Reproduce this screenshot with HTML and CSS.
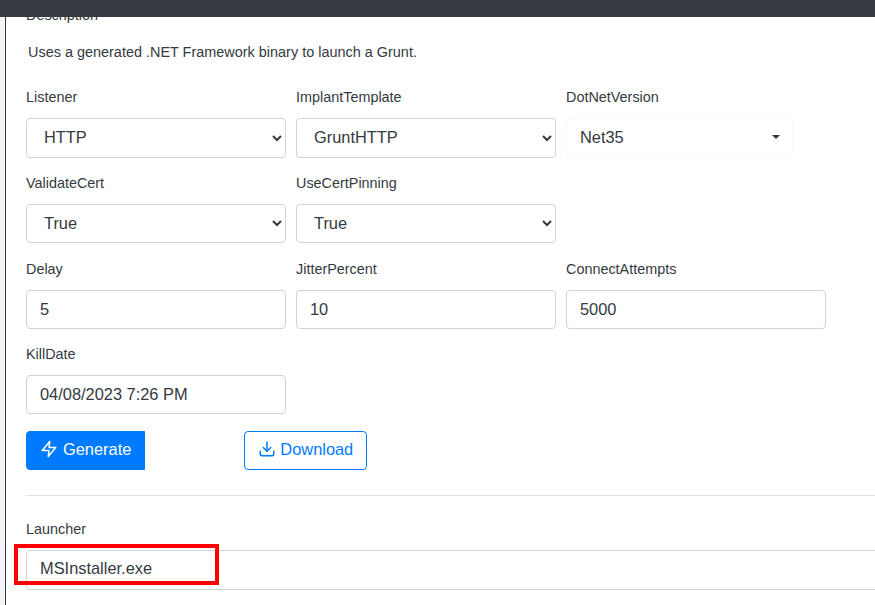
FILE: index.html
```html
<!DOCTYPE html>
<html>
<head>
    <title>Grunt Launcher</title>
    <link rel="stylesheet" href="styles.css">
</head>
<body>
    <div class="topbar"></div>
    <div class="page">
        <main class="content">
            <label class="desc-label">Description</label>
            <p class="desc">Uses a generated .NET Framework binary to launch a Grunt.</p>
            <form class="launcher-form">
                <div class="form-row">
                    <div class="field">
                        <label for="listener">Listener</label>
                        <select id="listener" class="control"><option>HTTP</option></select>
                    </div>
                    <div class="field">
                        <label for="template">ImplantTemplate</label>
                        <select id="template" class="control"><option>GruntHTTP</option></select>
                    </div>
                    <div class="field">
                        <label>DotNetVersion</label>
                        <div class="dropdown">Net35<span class="caret"></span></div>
                    </div>
                </div>
                <div class="form-row">
                    <div class="field">
                        <label for="validate">ValidateCert</label>
                        <select id="validate" class="control"><option>True</option></select>
                    </div>
                    <div class="field">
                        <label for="pinning">UseCertPinning</label>
                        <select id="pinning" class="control"><option>True</option></select>
                    </div>
                </div>
                <div class="form-row">
                    <div class="field">
                        <label for="delay">Delay</label>
                        <input id="delay" class="control text-input" type="text" value="5">
                    </div>
                    <div class="field">
                        <label for="jitter">JitterPercent</label>
                        <input id="jitter" class="control text-input" type="text" value="10">
                    </div>
                    <div class="field">
                        <label for="attempts">ConnectAttempts</label>
                        <input id="attempts" class="control text-input" type="text" value="5000">
                    </div>
                </div>
                <div class="form-row">
                    <div class="field">
                        <label for="killdate">KillDate</label>
                        <input id="killdate" class="control" type="text" value="04/08/2023 7:26 PM">
                    </div>
                </div>
                <div class="actions">
                    <button type="button" class="btn btn-primary">
                        <svg class="icon" viewBox="0 0 24 24"><polygon points="13 2 3 14 12 14 11 22 21 10 12 10 13 2"></polygon></svg>
                        Generate
                    </button>
                    <button type="button" class="btn btn-outline">
                        <svg class="icon" viewBox="0 0 24 24"><path d="M21 15v4a2 2 0 0 1-2 2H5a2 2 0 0 1-2-2v-4"></path><polyline points="7 10 12 15 17 10"></polyline><line x1="12" y1="15" x2="12" y2="3"></line></svg>
                        Download
                    </button>
                </div>
                <hr class="divider">
                <div class="field-wide">
                    <label for="launcher">Launcher</label>
                    <input id="launcher" class="control launcher-input" type="text" value="MSInstaller.exe">
                    <div class="highlight"></div>
                </div>
            </form>
        </main>
    </div>
</body>
</html>
```

FILE: styles.css
```css
html, body {
    height: 100%;
}

body {
    margin: 0;
    overflow: hidden;
    display: flex;
    flex-direction: column;
    font-family: 'Liberation Sans', Arial, sans-serif;
    color: #343a40;
    background-color: #fff;
}

.topbar {
    height: 17px;
    flex: none;
    background-color: #343a40;
}

.page {
    flex: 1;
    min-height: 0;
    padding-left: 5px;
    background-color: #f4f5f8;
}

.content {
    height: 100%;
    padding-left: 20px;
    overflow: hidden;
    background-color: #fff;
    border-left: 1px solid #343a40;
}

label {
    display: block;
    font-size: 14.4px;
    line-height: 18px;
    margin-bottom: 12px;
}

.desc-label {
    margin-top: -11px;
    margin-bottom: 17px;
}

.desc {
    margin: 0 0 25.4px 2px;
    font-size: 14.45px;
    line-height: 22px;
}

.form-row {
    display: flex;
    gap: 10px;
    margin-bottom: 16.4px;
}

.field {
    width: 260px;
}

.control {
    display: block;
    width: 100%;
    height: 39.2px;
    padding: 6px 13px 7px;
    box-sizing: border-box;
    font-family: inherit;
    font-size: 16.4px;
    color: #343a40;
    background-color: #fff;
    border: 1px solid #ced4da;
    border-radius: 4px;
}

.text-input {
    padding-bottom: 6px;
}

.launcher-input {
    height: 40px;
    padding-bottom: 8px;
}

.dropdown {
    display: flex;
    justify-content: space-between;
    align-items: center;
    width: 227px;
    height: 39.2px;
    padding: 0 12px 0 13px;
    box-sizing: border-box;
    font-size: 16.4px;
    border: 1px solid #f8f9fa;
    border-radius: 4px;
}

.caret {
    margin-top: -2px;
    border-top: 4px solid #343a40;
    border-left: 4px solid transparent;
    border-right: 4px solid transparent;
}

.actions {
    display: flex;
    gap: 99px;
}

.btn {
    display: flex;
    align-items: center;
    gap: 5px;
    height: 39px;
    padding: 0 13px 1px;
    box-sizing: border-box;
    font-family: inherit;
    font-size: 16.4px;
    background-color: #fff;
    border: 1px solid #007bff;
    border-radius: 4px;
    cursor: pointer;
}

.btn-primary {
    color: #fff;
    background-color: #007bff;
    border-radius: 4px 0 0 4px;
}

.btn-outline {
    gap: 4px;
    color: #007bff;
}

.icon {
    width: 18px;
    height: 18px;
    margin-top: -2px;
    fill: none;
    stroke: currentColor;
    stroke-width: 2;
    stroke-linecap: round;
    stroke-linejoin: round;
}

.divider {
    margin: 25px 0 24px;
    border: 0;
    border-top: 1px solid #dfe2e5;
}

.field-wide {
    position: relative;
    width: 900px;
}

.highlight {
    position: absolute;
    left: -12px;
    top: 24.3px;
    width: 205px;
    height: 41px;
    box-sizing: border-box;
    border: 4px solid #f00;
}
```
